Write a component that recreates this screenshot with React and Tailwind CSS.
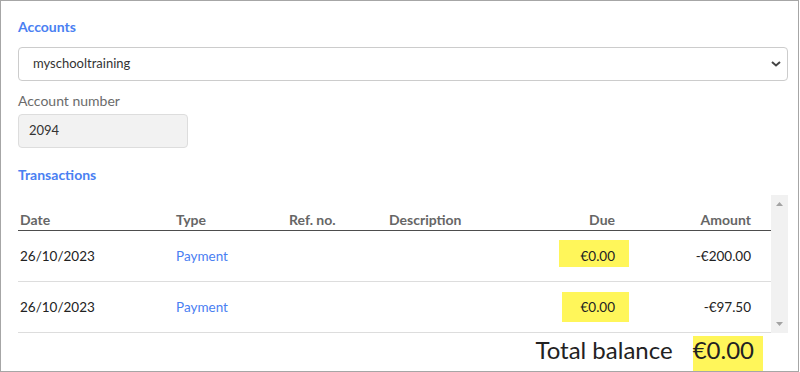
export default function App() {
  const rows = [
    { date: "26/10/2023", type: "Payment", due: "€0.00", amount: "-€200.00", pt: "pt-[9px]", box: "pl-[21px] pt-[6px] pb-[1px]" },
    { date: "26/10/2023", type: "Payment", due: "€0.00", amount: "-€97.50", pt: "pt-[10px]", box: "pl-[18px] pt-[5px] pb-[5px]" },
  ];
  return (
    <div className="w-[799px] h-[372px] overflow-hidden border border-[#a6a6a6] bg-white pt-[16px] pl-[17px] pr-[10px] font-['Lato',sans-serif]">
      <div className="text-[14px] leading-[20px] font-bold text-[#4a80f2]">Accounts</div>
      <div className="mt-[10px] h-[34px] border border-[#cccccc] rounded-[4px] flex items-center justify-between pl-[14px] pr-[5px]">
        <span className="text-[13px] text-[#333]">myschooltraining</span>
        <svg width="10" height="6" viewBox="0 0 10 6" className="mr-[1px]">
          <path d="M1 1 L5 4.5 L9 1" fill="none" stroke="#444" strokeWidth="2" />
        </svg>
      </div>
      <div className="mt-[10px] text-[14px] leading-[20px] text-[#6b6b6b]">Account number</div>
      <div className="mt-[3px] w-[170px] h-[34px] border border-[#dddddd] rounded-[4px] bg-[#f2f2f2] flex items-center pl-[10px]">
        <span className="text-[13px] text-[#333]">2094</span>
      </div>
      <div className="mt-[17px] text-[14px] leading-[20px] font-bold text-[#4a80f2]">Transactions</div>
      <div className="mt-[10px] flex h-[138px]">
        <div className="w-[753px] text-[13.5px]">
          <div className="grid grid-cols-[156px_113px_100px_172px_70px_142px] h-[36px] border-b border-[#4d4d4d] items-end text-[14px] leading-[20px] font-bold text-[#666] pb-[0px]">
            <div className="pl-[2px]">Date</div>
            <div className="pl-[2px]">Type</div>
            <div className="pl-[2px]">Ref. no.</div>
            <div className="pl-[2px]">Description</div>
            <div className="text-right pr-[14px]">Due</div>
            <div className="text-right pr-[20px]">Amount</div>
          </div>
          {rows.map((r, i) => (
            <div key={i} className="grid grid-cols-[156px_113px_100px_172px_70px_142px] h-[51px] border-b border-[#dddddd] items-center leading-[20px]">
              <div className="pl-[2px] text-[#222]">{r.date}</div>
              <div className="pl-[2px] text-[#4a80f2]">{r.type}</div>
              <div></div>
              <div></div>
              <div className={`self-start ${r.pt} flex justify-end`}>
                <span className={`bg-[#fff65a] text-[#222] pr-[14px] ${r.box}`}>{r.due}</span>
              </div>
              <div className="text-right pr-[20px] text-[#222]">{r.amount}</div>
            </div>
          ))}
        </div>
        <div className="w-[17px] bg-[#f1f1f1] flex flex-col justify-between items-center py-[7px]">
          <svg width="7" height="4" viewBox="0 0 7 4"><path d="M0 4 L3.5 0 L7 4 Z" fill="#a3a3a3" /></svg>
          <svg width="7" height="4" viewBox="0 0 7 4"><path d="M0 0 L3.5 4 L7 0 Z" fill="#a3a3a3" /></svg>
        </div>
      </div>
      <div className="mt-[3px] flex justify-end items-start pr-[25px] text-[24px] leading-[27px] text-[#222]">
        <span>Total balance</span>
        <span className="ml-[20px] bg-[#fff65a] pr-[9px] pb-[12px]">€0.00</span>
      </div>
    </div>
  );
}
